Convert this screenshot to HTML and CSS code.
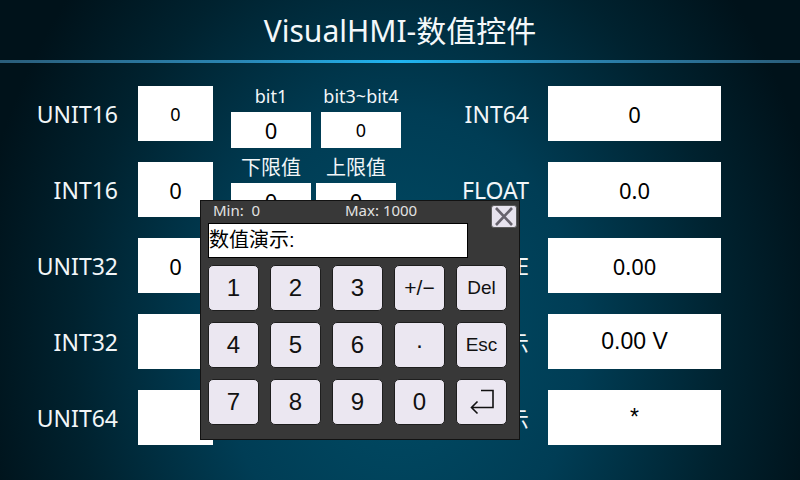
FILE: index.html
```html
<!DOCTYPE html>
<html lang="zh">
<head>
<meta charset="utf-8">
<title>VisualHMI-数值控件</title>
<link rel="stylesheet" href="styles.css">
</head>
<body>
<div class="screen">
  <header class="header">VisualHMI-数值控件</header>
  <div class="divider"></div>
  <main class="content">
    <section class="col-left">
      <div class="row"><span class="label">UNIT16</span><span class="box box-sm small">0</span></div>
      <div class="row"><span class="label">INT16</span><span class="box box-sm">0</span></div>
      <div class="row"><span class="label">UNIT32</span><span class="box box-sm">0</span></div>
      <div class="row"><span class="label">INT32</span><span class="box box-sm"></span></div>
      <div class="row"><span class="label">UNIT64</span><span class="box box-sm"></span></div>
    </section>
    <section class="col-mid">
      <div class="mid-row mid-row1">
        <div class="mid-item"><span class="mid-label">bit1</span><span class="mid-box">0</span></div>
        <div class="mid-item"><span class="mid-label">bit3~bit4</span><span class="mid-box small">0</span></div>
      </div>
      <div class="mid-row mid-row2">
        <div class="mid-item"><span class="mid-label cjk">下限值</span><span class="mid-box">0</span></div>
        <div class="mid-item"><span class="mid-label cjk">上限值</span><span class="mid-box">0</span></div>
      </div>
    </section>
    <section class="col-right">
      <div class="row"><span class="label label-r">INT64</span><span class="box box-lg">0</span></div>
      <div class="row"><span class="label label-r">FLOAT</span><span class="box box-lg">0.0</span></div>
      <div class="row"><span class="label label-r">DOUBLE</span><span class="box box-lg">0.00</span></div>
      <div class="row"><span class="label label-r">单位显示</span><span class="box box-lg arial">0.00 V</span></div>
      <div class="row"><span class="label label-r">密码显示</span><span class="box box-lg arial">*</span></div>
    </section>
  </main>

  <div class="popup">
    <div class="pop-head"><span class="pop-min">Min:&nbsp; 0</span><span class="pop-max">Max: 1000</span></div>
    <div class="close">
      <svg width="24" height="21" viewBox="0 0 24 21"><path d="M4 2 L20 19 M20 2 L4 19" stroke="#67636d" stroke-width="2.6" fill="none"/></svg>
    </div>
    <div class="pop-input">数值演示:</div>
    <div class="keypad">
      <div class="key">1</div><div class="key">2</div><div class="key">3</div><div class="key key-pm">+/−</div><div class="key key-word">Del</div>
      <div class="key">4</div><div class="key">5</div><div class="key">6</div><div class="key">·</div><div class="key key-word">Esc</div>
      <div class="key">7</div><div class="key">8</div><div class="key">9</div><div class="key">0</div>
      <div class="key"><svg width="51" height="46" viewBox="0 0 51 46"><path d="M25 11.5 H37 V28.5 H15.5 M21.5 22.5 L15.5 28.5 L21.5 34.5" stroke="#111" stroke-width="1.6" fill="none"/></svg></div>
    </div>
  </div>
</div>
</body>
</html>
```

FILE: styles.css
```css
html, body {
  margin: 0;
  padding: 0;
}
body {
  width: 800px;
  height: 480px;
  overflow: hidden;
  font-family: "Noto Sans", "Noto Sans CJK SC", sans-serif;
}
.screen {
  position: relative;
  width: 800px;
  height: 480px;
  background: radial-gradient(ellipse 430px 540px at 400px 340px, #004d67 0%, #003d55 42%, #00222f 76%, #00121a 100%);
  color: #fff;
}
.header {
  height: 60px;
  display: flex;
  align-items: center;
  justify-content: center;
  font-size: 30px;
  line-height: 1;
  color: #f4f8fa;
  padding-top: 2px;
  box-sizing: border-box;
}
.divider {
  height: 3px;
  background: linear-gradient(90deg, #2a5d7a 0%, #2a86b4 30%, #1fb6f2 50%, #2a86b4 70%, #2a5d7a 100%);
}
.content {
  display: flex;
  padding-top: 23px;
}
.col-left, .col-right {
  display: flex;
  flex-direction: column;
  gap: 21px;
}
.col-left { width: 213px; }
.row {
  display: flex;
  align-items: center;
  height: 55px;
}
.label {
  width: 118px;
  text-align: right;
  font-size: 23px;
  color: #f2f6f8;
  white-space: nowrap;
}
.label-r { width: 128px; }
.box {
  background: #fff;
  color: #000;
  height: 55px;
  display: flex;
  align-items: center;
  justify-content: center;
  font-size: 22px;
}
.box-sm { width: 75px; margin-left: 20px; }
.box-lg { width: 173px; margin-left: 19px; }
.box.small, .mid-box.small { font-size: 18px; }
.arial { font-family: "Liberation Sans", Arial, sans-serif; font-size: 23px; }

.col-mid {
  width: 170px;
  margin-left: 18px;
  display: flex;
  flex-direction: column;
}
.mid-row { display: flex; }
.mid-row1 { gap: 10px; }
.mid-row2 { gap: 5px; margin-top: 10px; }
.mid-item {
  width: 80px;
  display: flex;
  flex-direction: column;
  align-items: center;
}
.mid-label {
  font-size: 18px;
  line-height: 20px;
  height: 20px;
  color: #f2f6f8;
  white-space: nowrap;
}
.mid-label.cjk { font-size: 20px; }
.mid-box {
  margin-top: 6px;
  width: 80px;
  height: 36px;
  background: #fff;
  color: #000;
  display: flex;
  align-items: center;
  justify-content: center;
  font-size: 22px;
}
.mid-row2 .mid-box { margin-top: 5px; }

.popup {
  position: absolute;
  left: 200px;
  top: 200px;
  width: 320px;
  height: 240px;
  box-sizing: border-box;
  border: 1px solid #121212;
  background: #383838;
}
.pop-head {
  height: 22px;
  box-sizing: border-box;
  padding-left: 12px;
  font-size: 15px;
  line-height: 18px;
  color: #e2e2e2;
  display: flex;
}
.pop-min { width: 132px; }
.close {
  position: absolute;
  left: 290px;
  top: 4px;
  width: 26px;
  height: 23px;
  box-sizing: border-box;
  border: 1px solid #5a5a5a;
  border-radius: 3px;
  background: #e7e3ee;
  display: flex;
  align-items: center;
  justify-content: center;
}
.pop-input {
  margin-left: 7px;
  width: 260px;
  height: 35px;
  box-sizing: border-box;
  border: 1px solid #000;
  background: #fff;
  color: #000;
  font-family: "Liberation Sans", "Noto Sans CJK SC", sans-serif;
  font-size: 20px;
  line-height: 33px;
  white-space: nowrap;
}
.keypad {
  margin-top: 7px;
  margin-left: 7px;
  display: grid;
  grid-template-columns: repeat(5, 51px);
  grid-auto-rows: 46px;
  column-gap: 11px;
  row-gap: 11px;
}
.key {
  box-sizing: border-box;
  border: 1px solid #1e1e1e;
  border-radius: 5px;
  background: #ebe7f1;
  color: #111;
  font-family: "Liberation Sans", Arial, sans-serif;
  font-size: 24px;
  display: flex;
  align-items: center;
  justify-content: center;
  position: relative;
}
.key svg { position: absolute; left: -1px; top: -1px; }
.key-pm { font-size: 21px; }
.key-word { font-size: 19px; }
```
